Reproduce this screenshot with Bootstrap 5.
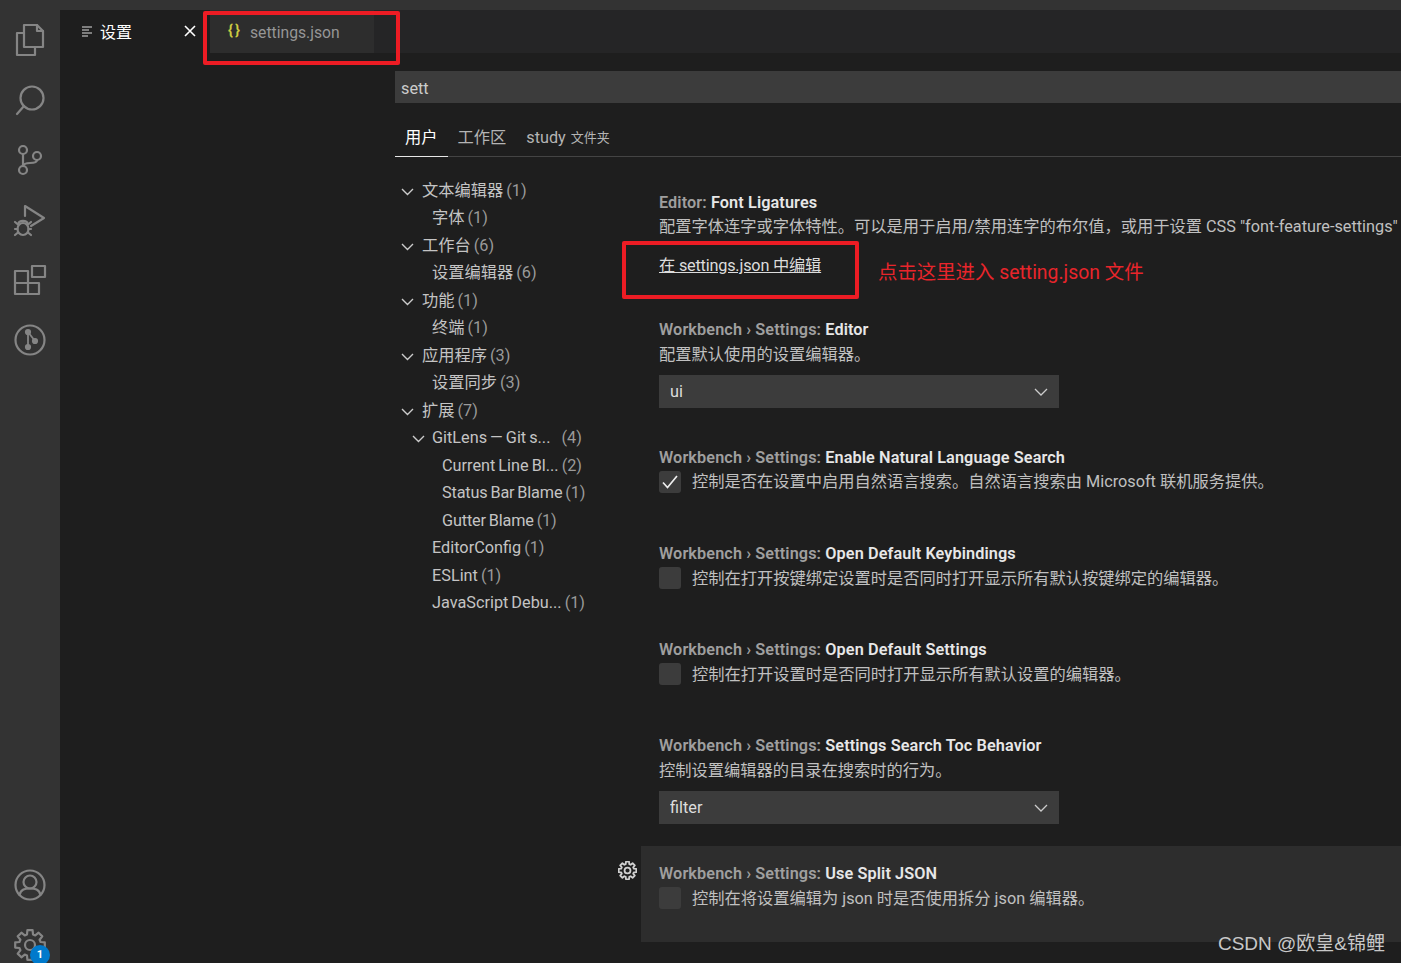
<!DOCTYPE html>
<html lang="zh-CN">
<head>
  <meta charset="UTF-8" />
  <title>设置 - settings.json</title>
  <link href="https://cdn.jsdelivr.net/npm/bootstrap@5.3.0/dist/css/bootstrap.min.css" rel="stylesheet"/>
  <style>
    html, body { height: 100%; }
    body {
      background: #1e1e1e;
      color: #ccc;
      font-family: Roboto, "Noto Sans CJK SC", sans-serif;
      font-size: 16.25px;
      overflow: hidden;
    }
    .shell { height: 963px; overflow: hidden; }

    .activity { width: 60px; background: #333; flex: none; }
    .act-btn { width: 60px; height: 60px; flex: none; }
    .act-btn svg { display: block; fill: none; stroke: #858585; stroke-width: 2.2; stroke-linejoin: round; stroke-linecap: round; }
    .act-gear { margin-bottom: -12px; }
    .act-badge {
      right: 10px; bottom: 10px; width: 20px; height: 20px;
      background: #007acc; color: #fff; font-size: 11px; font-weight: 700; line-height: 20px;
    }

    .title-strip { height: 10px; background: #333; flex: none; }
    .tabstrip { height: 43px; background: #252526; flex: none; }
    .ed-tab { height: 43px; flex: none; padding-top: 3px; font-size: 16px; }
    .ed-tab-on { width: 150px; background: #1e1e1e; color: #fff; padding-left: 22px; }
    .ed-tab-off { width: 164px; background: #2d2d2d; color: #969696; padding-left: 18px; font-size: 15.7px; }
    .json-mark { color: #cbcb41; font-weight: 700; font-size: 15px; width: 22px; margin-top: -5px; letter-spacing: 2px; }
    .lines-icon { stroke: #ddd; stroke-width: 1.2; margin-right: 8px; margin-top: -3px; }
    .close-x { margin-left: 52px; margin-top: -4px; stroke: #fff; stroke-width: 1.6; }

    .pane { margin-left: 335px; }
    .search-box.form-control {
      height: 32px; margin-top: 18px; padding: 2px 6px 0;
      background: #3c3c3c; color: #ccc; border: 0; border-radius: 0; font-size: 16.25px;
    }
    .set-tabs { margin-top: 17px; height: 37px; border-bottom: 1px solid #444; }
    .set-tabs .nav-link { color: #b4b4b4; padding: 6px 10px 0; height: 37px; font-size: 16.25px; }
    .set-tabs .nav-link.active { color: #fff; border-bottom: 1px solid #e7e7e7; }
    .set-tabs small { font-size: 13px; margin-left: 1px; position: relative; top: -1px; }

    .toc { width: 246px; flex: none; padding-top: 19.5px; }
    .toc-row { height: 27.5px; line-height: 27.5px; white-space: nowrap; color: #c4c4c4; word-spacing: -1px; }
    .toc-row svg { fill: none; stroke: #ccc; stroke-width: 1.4; width: 13px; height: 13px; }
    .lv0 { padding-left: 6px; }
    .lv0 svg { margin-right: 8px; }
    .lv1 { padding-left: 37px; }
    .lv1c { padding-left: 17px; }
    .lv1c svg { margin-right: 7px; }
    .lv2 { padding-left: 47px; }
    .lv-tight { letter-spacing: -.15px; }
    .toc-num { color: #9a9a9a; }
    .toc-fix { margin-left: 8px; }

    .items { margin-top: 18px; flex-grow: 1; min-width: 0; }
    .set-item { height: 96px; padding: 16px 0 0 18px; white-space: nowrap; }
    .set-item-first { height: 127px; }
    .set-item-tall { height: 128px; }
    .set-item-hover { background: #2d2d2d; }
    .set-title { line-height: 24px; font-weight: 600; color: #9f9f9f; letter-spacing: .1px; }
    .set-title b { font-weight: 600; color: #e7e7e7; }
    .set-desc { line-height: 24px; color: #c0c0c0; }
    .set-link { display: block; line-height: 24px; margin-top: 15px; color: #dcdcdc; text-decoration: underline; letter-spacing: -.2px; }
    .set-select.form-select {
      width: 400px; height: 33px; margin-top: 8px; padding: 2px 11px 0;
      background-color: #3c3c3c; color: #ddd; border: 0; border-radius: 0; font-size: 16.25px;
      background-position: right 10px center; background-size: 16px 16px;
      background-image: url("data:image/svg+xml,%3csvg xmlns='http://www.w3.org/2000/svg' viewBox='0 0 16 16'%3e%3cpath fill='none' stroke='%23ccc' stroke-width='1.3' d='M2 5l6 6 6-6'/%3e%3c/svg%3e");
    }
    .set-check { gap: 11px; }
    .set-check .form-check-input {
      width: 22px; height: 22px; margin: 1px 0 0; flex: none;
      background-color: #3c3c3c; border: 0; border-radius: 3px; background-size: 20px 20px;
    }
    .set-check .form-check-input:checked {
      background-image: url("data:image/svg+xml,%3csvg xmlns='http://www.w3.org/2000/svg' viewBox='0 0 20 20'%3e%3cpath fill='none' stroke='%23eee' stroke-width='1.7' d='M3 10.5l4.5 5L17 4'/%3e%3c/svg%3e");
    }
    .row-gap { padding-top: 1px; }
    .hover-gear { left: -23px; top: 15px; fill: none; stroke: #d0d0d0; stroke-width: 3; stroke-linejoin: round; }

    .red-box { border: 4px solid #ed1c24; border-radius: 2px; pointer-events: none; }
    .red-tabs { left: 203px; top: 11px; width: 197px; height: 54px; }
    .red-link { left: 622px; top: 241px; width: 237px; height: 58px; }
    .red-note { left: 878px; top: 258px; color: #e8252b; font-size: 19.4px; line-height: 30px; white-space: nowrap; }
    .watermark { right: 16px; top: 932px; color: #c8c8c8; font-family: "Liberation Sans", "Noto Sans CJK SC", sans-serif; font-size: 19px; line-height: 24px; white-space: nowrap; }
  </style>
</head>
<body>
  <svg width="0" height="0" class="position-absolute">
    <symbol id="gear" viewBox="-30 -30 60 60" overflow="visible">
      <path d="M14.8-2.6 14.8 2.6 10.6 3 9.6 5.3 12.3 8.6 8.6 12.3 5.3 9.6 3 10.6 2.6 14.8-2.6 14.8-3 10.6-5.3 9.6-8.6 12.3-12.3 8.6-9.6 5.3-10.6 3-14.8 2.6-14.8-2.6-10.6-3-9.6-5.3-12.3-8.6-8.6-12.3-5.3-9.6-3-10.6-2.6-14.8 2.6-14.8 3-10.6 5.3-9.6 8.6-12.3 12.3-8.6 9.6-5.3 10.6-3Z"/>
      <circle r="5"/>
    </symbol>
  </svg>

  <div class="shell d-flex flex-column position-relative">
    <div class="title-strip"></div>
    <div class="d-flex flex-grow-1" style="min-height:0">

      <!-- activity bar -->
      <div class="activity d-flex flex-column">
        <div class="act-btn"><svg width="60" height="60" viewBox="0 0 60 60"><path d="M24 15H37L43 21V37H24Z"/><path d="M37 15V21H43"/><path d="M24 23H17V45H35V37"/></svg></div>
        <div class="act-btn"><svg width="60" height="60" viewBox="0 0 60 60"><circle cx="32" cy="28" r="11.500"/><path d="M24 36 17 44"/></svg></div>
        <div class="act-btn"><svg width="60" height="60" viewBox="0 0 60 60"><circle cx="23" cy="20" r="4"/><circle cx="23" cy="40" r="4"/><circle cx="37" cy="26" r="4"/><path d="M23 24V36M37 30C37 33 33 33 30 33 27 33 24 33 23 36"/></svg></div>
        <div class="act-btn"><svg width="60" height="60" viewBox="0 0 60 60"><path d="M25 26V16L44 28 31 36"/><ellipse cx="23" cy="39" rx="5.500" ry="6"/><path d="M18.500 33.500C19 30 27 30 27.500 33.500M15 32l3 2.500M31 32l-3 2.500M15 39H17.500M28.500 39H31M15 45l3-2.500M31 45l-3-2.500"/></svg></div>
        <div class="act-btn"><svg width="60" height="60" viewBox="0 0 60 60"><rect x="32" y="16" width="13" height="11"/><path d="M15 21H28V44H15ZM15 33H39V44H28"/></svg></div>
        <div class="act-btn"><svg width="60" height="60" viewBox="0 0 60 60"><circle cx="30" cy="30" r="14.500"/><path d="M28 22V37M28 22 35 31" stroke-width="1.8"/><circle cx="28" cy="22" r="2" fill="#858585"/><circle cx="28" cy="37" r="2" fill="#858585"/><circle cx="35" cy="31" r="2" fill="#858585"/></svg></div>
        <div class="act-btn mt-auto"><svg width="60" height="60" viewBox="0 0 60 60"><circle cx="30" cy="30" r="14.500"/><circle cx="30" cy="27" r="6.500"/><path d="M19.500 40C21 34 25 33.500 30 33.500 35 33.500 39 34 40.500 40"/></svg></div>
        <div class="act-btn act-gear position-relative">
          <svg width="60" height="60"><use href="#gear"/></svg>
          <span class="act-badge position-absolute rounded-circle text-center">1</span>
        </div>
      </div>

      <div class="flex-grow-1 d-flex flex-column" style="min-width:0">
        <!-- editor tabs -->
        <div class="tabstrip d-flex">
          <div class="ed-tab ed-tab-on d-flex align-items-center">
            <svg class="lines-icon" width="10" height="11" viewBox="0 0 10 11"><path d="M0 1H10M0 4H7M0 7H10M0 10H6"/></svg>
            <span>设置</span>
            <svg class="close-x" width="12" height="12" viewBox="0 0 12 12"><path d="M1 1 11 11M11 1 1 11"/></svg>
          </div>
          <div class="ed-tab ed-tab-off d-flex align-items-center">
            <span class="json-mark">{}</span>
            <span>settings.json</span>
          </div>
        </div>

        <div class="pane">
          <input class="search-box form-control" type="text" value="sett">
          <ul class="nav set-tabs">
            <li class="nav-item"><a class="nav-link active" href="#">用户</a></li>
            <li class="nav-item"><a class="nav-link" href="#">工作区</a></li>
            <li class="nav-item"><a class="nav-link" href="#">study <small>文件夹</small></a></li>
          </ul>

          <div class="d-flex">
            <!-- table of contents -->
            <div class="toc">
              <div class="toc-row lv0"><svg viewBox="0 0 13 13"><path d="M1 4l5.500 5.500L12 4"/></svg>文本编辑器 <span class="toc-num">(1)</span></div>
              <div class="toc-row lv1">字体 <span class="toc-num">(1)</span></div>
              <div class="toc-row lv0"><svg viewBox="0 0 13 13"><path d="M1 4l5.500 5.500L12 4"/></svg>工作台 <span class="toc-num">(6)</span></div>
              <div class="toc-row lv1">设置编辑器 <span class="toc-num">(6)</span></div>
              <div class="toc-row lv0"><svg viewBox="0 0 13 13"><path d="M1 4l5.500 5.500L12 4"/></svg>功能 <span class="toc-num">(1)</span></div>
              <div class="toc-row lv1">终端 <span class="toc-num">(1)</span></div>
              <div class="toc-row lv0"><svg viewBox="0 0 13 13"><path d="M1 4l5.500 5.500L12 4"/></svg>应用程序 <span class="toc-num">(3)</span></div>
              <div class="toc-row lv1">设置同步 <span class="toc-num">(3)</span></div>
              <div class="toc-row lv0"><svg viewBox="0 0 13 13"><path d="M1 4l5.500 5.500L12 4"/></svg>扩展 <span class="toc-num">(7)</span></div>
              <div class="toc-row lv1c"><svg viewBox="0 0 13 13"><path d="M1 4l5.500 5.500L12 4"/></svg>GitLens — Git s... <span class="toc-num toc-fix">(4)</span></div>
              <div class="toc-row lv2">Current Line Bl... <span class="toc-num">(2)</span></div>
              <div class="toc-row lv2 lv-tight">Status Bar Blame <span class="toc-num">(1)</span></div>
              <div class="toc-row lv2 lv-tight">Gutter Blame <span class="toc-num">(1)</span></div>
              <div class="toc-row lv1">EditorConfig <span class="toc-num">(1)</span></div>
              <div class="toc-row lv1">ESLint <span class="toc-num">(1)</span></div>
              <div class="toc-row lv1">JavaScript Debu... <span class="toc-num">(1)</span></div>
            </div>

            <!-- settings list -->
            <div class="items">
              <div class="set-item set-item-first">
                <div class="set-title">Editor: <b>Font Ligatures</b></div>
                <div class="set-desc">配置字体连字或字体特性。可以是用于启用/禁用连字的布尔值，或用于设置 CSS "font-feature-settings"</div>
                <a class="set-link" href="#">在 settings.json 中编辑</a>
              </div>
              <div class="set-item set-item-tall">
                <div class="set-title">Workbench › Settings: <b>Editor</b></div>
                <div class="set-desc row-gap">配置默认使用的设置编辑器。</div>
                <select class="set-select form-select"><option>ui</option></select>
              </div>
              <div class="set-item">
                <div class="set-title">Workbench › Settings: <b>Enable Natural Language Search</b></div>
                <div class="set-check d-flex">
                  <input class="form-check-input" type="checkbox" checked>
                  <div class="set-desc">控制是否在设置中启用自然语言搜索。自然语言搜索由 Microsoft 联机服务提供。</div>
                </div>
              </div>
              <div class="set-item">
                <div class="set-title">Workbench › Settings: <b>Open Default Keybindings</b></div>
                <div class="set-check d-flex">
                  <input class="form-check-input" type="checkbox">
                  <div class="set-desc row-gap">控制在打开按键绑定设置时是否同时打开显示所有默认按键绑定的编辑器。</div>
                </div>
              </div>
              <div class="set-item">
                <div class="set-title">Workbench › Settings: <b>Open Default Settings</b></div>
                <div class="set-check d-flex">
                  <input class="form-check-input" type="checkbox">
                  <div class="set-desc row-gap">控制在打开设置时是否同时打开显示所有默认设置的编辑器。</div>
                </div>
              </div>
              <div class="set-item set-item-tall">
                <div class="set-title">Workbench › Settings: <b>Settings Search Toc Behavior</b></div>
                <div class="set-desc row-gap">控制设置编辑器的目录在搜索时的行为。</div>
                <select class="set-select form-select"><option>filter</option></select>
              </div>
              <div class="set-item set-item-hover position-relative">
                <svg class="hover-gear position-absolute" width="19" height="19" viewBox="-16 -16 32 32"><use href="#gear" x="-30" y="-30" width="60" height="60"/></svg>
                <div class="set-title">Workbench › Settings: <b>Use Split JSON</b></div>
                <div class="set-check d-flex">
                  <input class="form-check-input" type="checkbox">
                  <div class="set-desc row-gap">控制在将设置编辑为 json 时是否使用拆分 json 编辑器。</div>
                </div>
              </div>
            </div>
          </div>
        </div>
      </div>
    </div>

    <!-- annotations drawn over the screenshot -->
    <div class="red-box red-tabs position-absolute"></div>
    <div class="red-box red-link position-absolute"></div>
    <div class="red-note position-absolute">点击这里进入 setting.json 文件</div>
    <div class="watermark position-absolute">CSDN @欧皇&amp;锦鲤</div>
  </div>

  <script src="https://cdn.jsdelivr.net/npm/bootstrap@5.3.0/dist/js/bootstrap.bundle.min.js"></script>
</body>
</html>
